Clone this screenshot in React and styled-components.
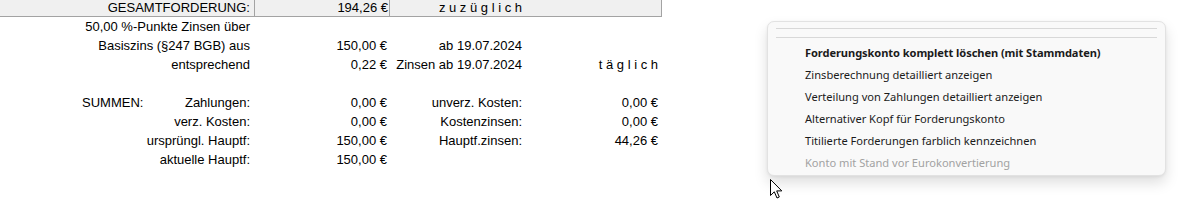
import React from "react";
import styled, { createGlobalStyle } from "styled-components";

const Global = createGlobalStyle`
  html, body { margin: 0; padding: 0; background: #ffffff; }
  body { width: 1178px; height: 217px; overflow: hidden; }
`;

const Page = styled.div`
  position: relative;
  width: 1178px;
  height: 217px;
`;

const Sheet = styled.div`
  width: 662px;
  font-family: "Liberation Sans", Arial, sans-serif;
  font-size: 13px;
  color: #000;
`;

const Row = styled.div`
  display: grid;
  grid-template-columns: 82px 173px 135px 138px 134px;
  height: ${(p) => (p.$header ? "16px" : "19px")};
  line-height: ${(p) => (p.$header ? "16px" : "19px")};
  background: ${(p) => (p.$header ? "#f0f0f0" : "transparent")};
  border-bottom: ${(p) => (p.$header ? "1px solid #a3a3a3" : "none")};
`;

const Cell = styled.div`
  box-sizing: border-box;
  grid-column: ${(p) => p.$span || "auto"};
  display: flex;
  justify-content: ${(p) => p.$justify || "flex-end"};
  padding-right: ${(p) => p.$pr ?? 4}px;
  padding-left: ${(p) => p.$pl ?? 0}px;
  border-right: 1px solid ${(p) => (p.$border ? "#a3a3a3" : "transparent")};
  white-space: pre;
  overflow: visible;
`;

const Menu = styled.div`
  position: absolute;
  left: 767px;
  top: 21px;
  width: 399px;
  box-sizing: border-box;
  background: #f9f9f9;
  border: 1px solid #e2e2e2;
  border-radius: 7px;
  box-shadow: 0 7px 14px rgba(0, 0, 0, 0.13), 0 1px 3px rgba(0, 0, 0, 0.06);
  padding: 6px 8px 1px;
  font-family: "Noto Sans", "Open Sans", sans-serif;
  font-size: 11.1px;
  color: #1b1b1b;
`;

const Separator = styled.div`
  height: 1px;
  background: #d8d8d8;
  margin-bottom: ${(p) => p.$gap}px;
`;

const Item = styled.div`
  height: 22px;
  line-height: 22px;
  padding-left: 29px;
  font-weight: ${(p) => (p.$bold ? 700 : 400)};
  letter-spacing: ${(p) => (p.$bold ? "-0.08px" : "0")};
  color: ${(p) => (p.$disabled ? "#a2a2a2" : "#1b1b1b")};
  white-space: nowrap;
`;

const Cursor = styled.svg`
  position: absolute;
  left: 769px;
  top: 178px;
`;

const rows = [
  { b: "50,00 %-Punkte Zinsen über" },
  { b: "Basiszins (§247 BGB) aus", v: "150,00 €", c: "ab 19.07.2024" },
  { b: "entsprechend", v: "0,22 €", c: "Zinsen ab 19.07.2024", d: "t ä g l i c h" },
  {},
  { a: "SUMMEN:", b: "Zahlungen:", v: "0,00 €", c: "unverz. Kosten:", d: "0,00 €" },
  { b: "verz. Kosten:", v: "0,00 €", c: "Kostenzinsen:", d: "0,00 €" },
  { b: "ursprüngl. Hauptf:", v: "150,00 €", c: "Hauptf.zinsen:", d: "44,26 €" },
  { b: "aktuelle Hauptf:", v: "150,00 €" },
];

const menuItems = [
  { t: "Forderungskonto komplett löschen (mit Stammdaten)", bold: true },
  { t: "Zinsberechnung detailliert anzeigen" },
  { t: "Verteilung von Zahlungen detailliert anzeigen" },
  { t: "Alternativer Kopf für Forderungskonto" },
  { t: "Titilierte Forderungen farblich kennzeichnen" },
  { t: "Konto mit Stand vor Eurokonvertierung", disabled: true },
];

export default function App() {
  return (
    <Page>
      <Global />
      <Sheet>
        <Row $header>
          <Cell $span="1 / 3" $border>GESAMTFORDERUNG:</Cell>
          <Cell $border $pr={1}>194,26 €</Cell>
          <Cell $pr={5}>z u z ü g l i c h</Cell>
          <Cell $border />
        </Row>
        {rows.map((r, i) => (
          <Row key={i}>
            <Cell $justify="flex-start" $pr={0} $pl={1} />
            <Cell $justify={r.a ? "space-between" : "flex-end"} $pl={0}>
              {r.a ? <span>{r.a}</span> : null}
              <span>{r.b || ""}</span>
            </Cell>
            <Cell $pr={2}>{r.v || ""}</Cell>
            <Cell $pr={5}>{r.c || ""}</Cell>
            <Cell $pr={3}>{r.d || ""}</Cell>
          </Row>
        ))}
      </Sheet>
      <Menu>
        <Separator $gap={8} />
        <Separator $gap={4} />
        {menuItems.map((m) => (
          <Item key={m.t} $bold={m.bold} $disabled={m.disabled}>
            {m.t}
          </Item>
        ))}
      </Menu>
      <Cursor width="14" height="22" viewBox="0 0 14 22">
        <path
          d="M1.5 1.5 L1.5 17.5 L5.3 13.8 L8 20 L10.3 19 L7.7 12.9 L12.8 12.9 Z"
          fill="#fff"
          stroke="#000"
          strokeWidth="1"
          strokeLinejoin="miter"
        />
      </Cursor>
    </Page>
  );
}
